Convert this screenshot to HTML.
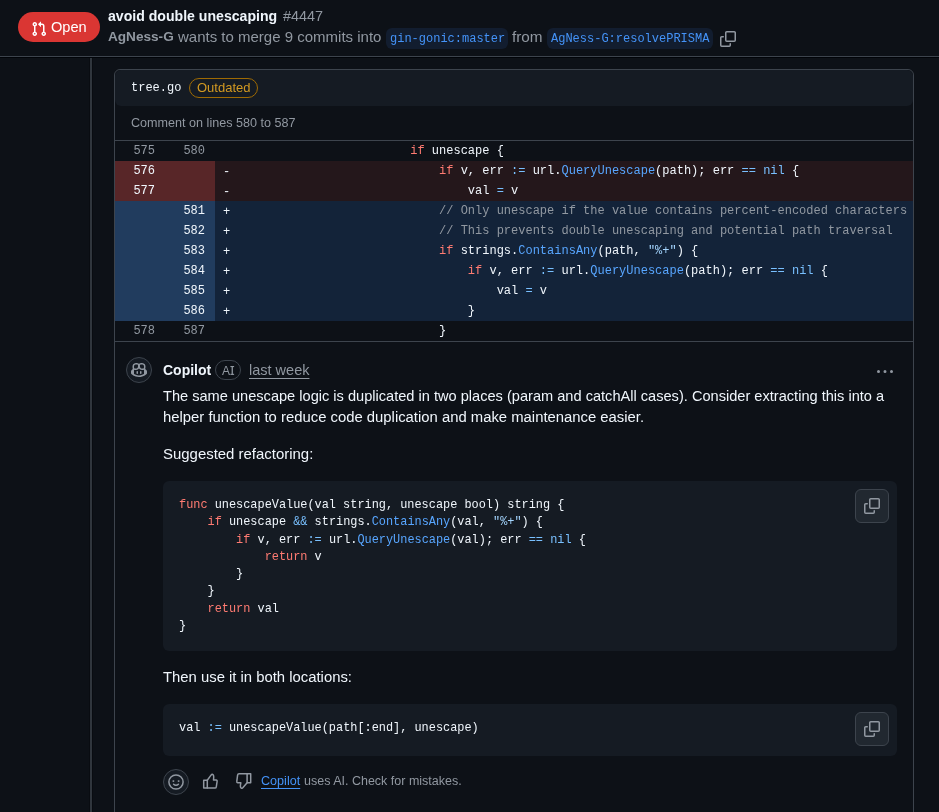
<!DOCTYPE html>
<html><head><meta charset="utf-8">
<style>
*{box-sizing:border-box;margin:0;padding:0}
html,body{width:939px;height:812px;overflow:hidden;background:#0d1117;color:#f0f6fc;font-family:"Liberation Sans",sans-serif}
body{will-change:transform}
.a{position:absolute;white-space:pre;line-height:1}
.mono{font-family:"Liberation Mono",monospace}
.muted{color:#9198a1}
svg{display:block}
#open{position:absolute;left:18px;top:12px;width:82px;height:30px;border-radius:15px;background:#da3633}
.branch{position:absolute;top:28px;height:21px;border-radius:6px;background:#121d2f}
.bt{color:#4493f8;font-size:12px}
#box{position:absolute;left:114px;top:69px;width:800px;height:800px;border:1px solid #3d444d;border-radius:6px}
#fhead{position:absolute;left:115px;top:70px;width:798px;height:36px;background:#151b23;border-radius:6px}
#outdated{position:absolute;left:189px;top:78px;width:69px;height:20px;border:1px solid #9e6a03;border-radius:10px}
.hl{position:absolute;left:115px;width:798px;height:1px;background:#3d444d}
.row{position:absolute;left:115px;width:798px;height:20px;font-family:"Liberation Mono",monospace;font-size:12px;line-height:20px;white-space:pre}
.row .ln{position:absolute;top:0;width:50px;height:20px;text-align:right;padding-right:10px;color:#9198a1}
.row .l1{left:0}.row .l2{left:50px}
.row .code{position:absolute;left:100px;top:0;width:698px;height:20px;padding-left:8px;color:#f0f6fc}
.row.del .ln{background:#582628;color:#f0f6fc}
.row.del .code{background:#24171b}
.row.add .ln{background:#213c5e;color:#f0f6fc}
.row.add .code{background:#132339}
.mk{position:relative;top:1px}
.k{color:#ff7b72}.f{color:#58a6ff}.o{color:#79c0ff}.s{color:#a5d6ff}.c{color:#9198a1}
.codeblk{position:absolute;left:163px;width:734px;background:#151b23;border-radius:6px}
.codeblk pre{position:absolute;left:16px;top:16px;font-family:"Liberation Mono",monospace;font-size:11.9px;line-height:17.25px;color:#f0f6fc;white-space:pre}
.copybtn{position:absolute;left:692px;top:8px;width:34px;height:34px;border:1px solid #3d444d;border-radius:6px;background:#212830}
.copybtn svg{position:absolute;left:8px;top:8px}
.body{font-size:14.7px;color:#f0f6fc}
</style></head>
<body>
<!-- header -->
<div id="open">
<svg style="position:absolute;left:13px;top:9px" width="16" height="16" viewBox="0 0 16 16" fill="#fff"><path d="M1.5 3.25a2.25 2.25 0 1 1 3 2.122v5.256a2.251 2.251 0 1 1-1.5 0V5.372A2.25 2.25 0 0 1 1.5 3.25Zm5.677-.177L9.573.677A.25.25 0 0 1 10 .854V2.5h1A2.5 2.5 0 0 1 13.5 5v5.628a2.251 2.251 0 1 1-1.5 0V5a1 1 0 0 0-1-1h-1v1.646a.25.25 0 0 1-.427.177L7.177 3.427a.25.25 0 0 1 0-.354ZM3.75 2.5a.75.75 0 1 0 0 1.5.75.75 0 0 0 0-1.5Zm0 9.5a.75.75 0 1 0 0 1.5.75.75 0 0 0 0-1.5Zm8.25.75a.75.75 0 1 0 1.5 0 .75.75 0 0 0-1.5 0Z"/></svg>
</div>
<div class="a" style="left:51px;top:20px;font-size:14.6px;color:#fff">Open</div>
<div class="a" style="left:108px;top:9px;font-size:14.1px;font-weight:bold">avoid double unescaping</div>
<div class="a muted" style="left:283px;top:9px;font-size:14.4px">#4447</div>
<div class="a muted" style="left:108px;top:30px;font-size:13.6px;font-weight:bold">AgNess-G</div>
<div class="a muted" style="left:178px;top:29px;font-size:15px">wants to merge 9 commits into</div>
<div class="branch" style="left:386px;width:122px"></div>
<div class="a mono bt" style="left:390px;top:33px">gin-gonic:master</div>
<div class="a muted" style="left:512px;top:29px;font-size:15.3px">from</div>
<div class="branch" style="left:547px;width:166px"></div>
<div class="a mono bt" style="left:551px;top:33px">AgNess-G:resolvePRISMA</div>
<div style="position:absolute;left:720px;top:31px"><svg width="16" height="16" viewBox="0 0 16 16" fill="#9198a1"><path d="M0 6.75C0 5.784.784 5 1.75 5h1.5a.75.75 0 0 1 0 1.5h-1.5a.25.25 0 0 0-.25.25v7.5c0 .138.112.25.25.25h7.5a.25.25 0 0 0 .25-.25v-1.5a.75.75 0 0 1 1.5 0v1.5A1.75 1.75 0 0 1 9.25 16h-7.5A1.75 1.75 0 0 1 0 14.25Z"/><path d="M5 1.75C5 .784 5.784 0 6.75 0h7.5C15.216 0 16 .784 16 1.75v7.5A1.75 1.75 0 0 1 14.25 11h-7.5A1.75 1.75 0 0 1 5 9.25Zm1.75-.25a.25.25 0 0 0-.25.25v7.5c0 .138.112.25.25.25h7.5a.25.25 0 0 0 .25-.25v-7.5a.25.25 0 0 0-.25-.25Z"/></svg></div>
<div style="position:absolute;left:0;top:56px;width:939px;height:1px;background:#3d444d"></div>
<div style="position:absolute;left:0;top:57px;width:939px;height:1px;background:#010409"></div>
<div style="position:absolute;left:89px;top:58px;width:4px;height:760px;background:#090c11"></div><div style="position:absolute;left:90px;top:58px;width:2px;height:760px;background:#30363d"></div>

<!-- review box -->
<div id="box"></div>
<div id="fhead"></div>
<div class="a mono" style="left:131px;top:82px;font-size:12px;color:#f0f6fc">tree.go</div>
<div id="outdated"></div>
<div class="a" style="left:197px;top:81px;font-size:13px;color:#d29922">Outdated</div>
<div class="a muted" style="left:131px;top:117px;font-size:12.6px">Comment on lines 580 to 587</div>
<div class="hl" style="top:140px"></div>
<div class="row ctx" style="top:141px"><div class="ln l1">575</div><div class="ln l2">580</div><div class="code"><span class="mk"> </span>                         <span class="k">if</span> unescape {</div></div>
<div class="row del" style="top:161px"><div class="ln l1">576</div><div class="ln l2"></div><div class="code"><span class="mk">-</span>                             <span class="k">if</span> v, err <span class="o">:=</span> url.<span class="f">QueryUnescape</span>(path); err <span class="o">==</span> <span class="o">nil</span> {</div></div>
<div class="row del" style="top:181px"><div class="ln l1">577</div><div class="ln l2"></div><div class="code"><span class="mk">-</span>                                 val <span class="o">=</span> v</div></div>
<div class="row add" style="top:201px"><div class="ln l1"></div><div class="ln l2">581</div><div class="code"><span class="mk">+</span>                             <span class="c">// Only unescape if the value contains percent-encoded characters</span></div></div>
<div class="row add" style="top:221px"><div class="ln l1"></div><div class="ln l2">582</div><div class="code"><span class="mk">+</span>                             <span class="c">// This prevents double unescaping and potential path traversal</span></div></div>
<div class="row add" style="top:241px"><div class="ln l1"></div><div class="ln l2">583</div><div class="code"><span class="mk">+</span>                             <span class="k">if</span> strings.<span class="f">ContainsAny</span>(path, <span class="s">"%+"</span>) {</div></div>
<div class="row add" style="top:261px"><div class="ln l1"></div><div class="ln l2">584</div><div class="code"><span class="mk">+</span>                                 <span class="k">if</span> v, err <span class="o">:=</span> url.<span class="f">QueryUnescape</span>(path); err <span class="o">==</span> <span class="o">nil</span> {</div></div>
<div class="row add" style="top:281px"><div class="ln l1"></div><div class="ln l2">585</div><div class="code"><span class="mk">+</span>                                     val <span class="o">=</span> v</div></div>
<div class="row add" style="top:301px"><div class="ln l1"></div><div class="ln l2">586</div><div class="code"><span class="mk">+</span>                                 }</div></div>
<div class="row ctx" style="top:321px"><div class="ln l1">578</div><div class="ln l2">587</div><div class="code"><span class="mk"> </span>                             }</div></div>
<div class="hl" style="top:341px"></div>

<!-- comment -->
<div style="position:absolute;left:126px;top:357px;width:26px;height:26px;border-radius:13px;border:1px solid #3d444d;background:#151b23"><svg style="position:absolute;left:4px;top:4px" width="16" height="16" viewBox="0 0 16 16" fill="#9198a1"><path d="M7.998 15.035c-4.562 0-7.873-2.914-7.998-3.749V9.338c.085-.628.677-1.686 1.588-2.065.013-.07.024-.143.036-.218.029-.183.06-.384.126-.612-.201-.508-.254-1.084-.254-1.656 0-.87.128-1.769.693-2.484.579-.733 1.494-1.124 2.724-1.261 1.206-.134 2.262.034 2.944.765.05.053.096.108.139.165.044-.057.094-.112.143-.165.682-.731 1.738-.899 2.944-.765 1.23.137 2.145.528 2.724 1.261.566.715.693 1.614.693 2.484 0 .572-.053 1.148-.254 1.656.066.228.098.429.126.612.012.076.024.148.037.218.924.385 1.522 1.471 1.591 2.095v1.872c0 .766-3.351 3.795-8.002 3.795Zm0-1.485c2.28 0 4.584-1.11 5.002-1.433V7.862l-.023-.116c-.49.21-1.075.291-1.727.291-1.146 0-2.059-.327-2.71-.991A3.222 3.222 0 0 1 8 6.303a3.24 3.24 0 0 1-.544.743c-.65.664-1.563.991-2.71.991-.652 0-1.236-.081-1.727-.291l-.023.116v4.255c.419.323 2.722 1.433 5.002 1.433ZM6.762 2.83c-.193-.206-.637-.413-1.682-.297-1.019.113-1.479.404-1.713.7-.247.312-.369.789-.369 1.554 0 .793.129 1.171.308 1.371.162.181.519.379 1.442.379.853 0 1.339-.235 1.638-.54.315-.322.527-.827.617-1.553.117-.935-.037-1.395-.241-1.614Zm4.155-.297c-1.044-.116-1.488.091-1.681.297-.204.219-.359.679-.242 1.614.091.726.303 1.231.618 1.553.299.305.784.54 1.638.54.922 0 1.28-.198 1.442-.379.179-.2.308-.578.308-1.371 0-.765-.123-1.242-.37-1.554-.233-.296-.693-.587-1.713-.7Z"/><path d="M6.25 9.037a.75.75 0 0 1 .75.75v1.501a.75.75 0 0 1-1.5 0V9.787a.75.75 0 0 1 .75-.75Zm4.25.75v1.501a.75.75 0 0 1-1.5 0V9.787a.75.75 0 0 1 1.5 0Z"/></svg></div>
<svg style="position:absolute;left:877px;top:364px" width="16" height="16" viewBox="0 0 16 16" fill="#9198a1"><path d="M8 9a1.5 1.5 0 1 0 0-3 1.5 1.5 0 0 0 0 3ZM1.5 9a1.5 1.5 0 1 0 0-3 1.5 1.5 0 0 0 0 3Zm13 0a1.5 1.5 0 1 0 0-3 1.5 1.5 0 0 0 0 3Z"/></svg>
<div class="a" style="left:163px;top:363px;font-size:14px;font-weight:bold">Copilot</div>
<div style="position:absolute;left:215px;top:360px;width:26px;height:20px;border-radius:10px;border:1px solid #3d444d"></div>
<div class="a muted" style="left:222px;top:365px;font-size:12px">A</div><svg style="position:absolute;left:230px;top:366px" width="5" height="9" viewBox="0 0 5 9" fill="#9198a1"><rect x="0.4" y="0" width="3.7" height="1.1"/><rect x="0.4" y="7.8" width="3.7" height="1.1"/><rect x="1.6" y="0" width="1.3" height="8.9"/></svg>
<div class="a muted" style="left:249px;top:363px;font-size:14.5px;text-decoration:underline;text-underline-offset:3px;text-decoration-skip-ink:none">last week</div>
<div class="a body" style="left:163px;top:389px;font-size:14.6px">The same unescape logic is duplicated in two places (param and catchAll cases). Consider extracting this into a</div>
<div class="a body" style="left:163px;top:410px;font-size:14.85px">helper function to reduce code duplication and make maintenance easier.</div>
<div class="a body" style="left:163px;top:447px;font-size:14.95px">Suggested refactoring:</div>
<div class="codeblk" style="top:481px;height:170px"><pre><span class="k">func</span> unescapeValue(val string, unescape bool) string {
    <span class="k">if</span> unescape <span class="o">&amp;&amp;</span> strings.<span class="f">ContainsAny</span>(val, <span class="s">"%+"</span>) {
        <span class="k">if</span> v, err <span class="o">:=</span> url.<span class="f">QueryUnescape</span>(val); err <span class="o">==</span> <span class="o">nil</span> {
            <span class="k">return</span> v
        }
    }
    <span class="k">return</span> val
}</pre><div class="copybtn"><svg width="16" height="16" viewBox="0 0 16 16" fill="#9198a1"><path d="M0 6.75C0 5.784.784 5 1.75 5h1.5a.75.75 0 0 1 0 1.5h-1.5a.25.25 0 0 0-.25.25v7.5c0 .138.112.25.25.25h7.5a.25.25 0 0 0 .25-.25v-1.5a.75.75 0 0 1 1.5 0v1.5A1.75 1.75 0 0 1 9.25 16h-7.5A1.75 1.75 0 0 1 0 14.25Z"/><path d="M5 1.75C5 .784 5.784 0 6.75 0h7.5C15.216 0 16 .784 16 1.75v7.5A1.75 1.75 0 0 1 14.25 11h-7.5A1.75 1.75 0 0 1 5 9.25Zm1.75-.25a.25.25 0 0 0-.25.25v7.5c0 .138.112.25.25.25h7.5a.25.25 0 0 0 .25-.25v-7.5a.25.25 0 0 0-.25-.25Z"/></svg></div></div>
<div class="a body" style="left:163px;top:670px;font-size:14.85px">Then use it in both locations:</div>
<div class="codeblk" style="top:704px;height:52px"><pre>val <span class="o">:=</span> unescapeValue(path[:end], unescape)</pre><div class="copybtn"><svg width="16" height="16" viewBox="0 0 16 16" fill="#9198a1"><path d="M0 6.75C0 5.784.784 5 1.75 5h1.5a.75.75 0 0 1 0 1.5h-1.5a.25.25 0 0 0-.25.25v7.5c0 .138.112.25.25.25h7.5a.25.25 0 0 0 .25-.25v-1.5a.75.75 0 0 1 1.5 0v1.5A1.75 1.75 0 0 1 9.25 16h-7.5A1.75 1.75 0 0 1 0 14.25Z"/><path d="M5 1.75C5 .784 5.784 0 6.75 0h7.5C15.216 0 16 .784 16 1.75v7.5A1.75 1.75 0 0 1 14.25 11h-7.5A1.75 1.75 0 0 1 5 9.25Zm1.75-.25a.25.25 0 0 0-.25.25v7.5c0 .138.112.25.25.25h7.5a.25.25 0 0 0 .25-.25v-7.5a.25.25 0 0 0-.25-.25Z"/></svg></div></div>

<div style="position:absolute;left:163px;top:769px;width:26px;height:26px;border-radius:13px;border:1px solid #3d444d;background:#151b23"><svg style="position:absolute;left:4px;top:4px" width="16" height="16" viewBox="0 0 16 16" fill="none" stroke="#9198a1" stroke-width="1.5"><circle cx="8" cy="8" r="7.1"/><path d="M5.6 10.3c.6.6 1.4 .95 2.4 .95s1.8-.35 2.4-.95" stroke-linecap="round"/><rect x="4.6" y="6.3" width="1.6" height="1.6" fill="#9198a1" stroke="none"/><rect x="9.8" y="6.3" width="1.6" height="1.6" fill="#9198a1" stroke="none"/></svg></div>
<svg style="position:absolute;left:202px;top:773px" width="16" height="16" viewBox="0 0 16 16" fill="none" stroke="#9198a1" stroke-width="1.5" stroke-linejoin="round" stroke-linecap="round"><path d="M1.7 7.2h3.6v7.8H1.7z"/><path d="M5.3 7.2L9.2 1.9Q10.2.8 11.1 1.7Q11.9 2.7 11.7 4.3L11.5 7.1H14.2Q15.3 7.2 15.1 8.5L14.3 13.8Q14.1 15 13 15H5.3"/></svg>
<svg style="position:absolute;left:235.5px;top:773px;transform:rotate(180deg)" width="16" height="16" viewBox="0 0 16 16" fill="none" stroke="#9198a1" stroke-width="1.5" stroke-linejoin="round" stroke-linecap="round"><path d="M1.3 6.2h3.6v9H1.3z"/><path d="M4.9 6.2L9.2 1.2Q10.2.3 11.1 1.2Q11.7 2 11.6 3.5L11.2 6.2H14.2Q15.4 6.3 15.2 7.6L14.4 13.8Q14.2 15.2 13 15.2H4.9"/></svg>
<div class="a" style="left:261px;top:775px;font-size:12.6px;color:#4493f8;text-decoration:underline;text-underline-offset:3px;text-decoration-skip-ink:none">Copilot</div>
<div class="a muted" style="left:304px;top:775px;font-size:12.5px">uses AI. Check for mistakes.</div>
</body></html>
